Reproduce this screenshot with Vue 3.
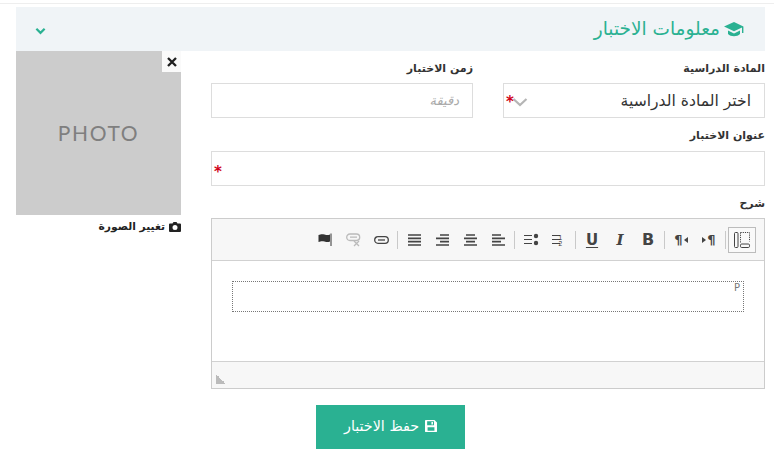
<script setup>
</script>

<template>
  <div class="page">
    <div class="topline"></div>
    <div class="panel">
      <header class="head">
        <h2 class="title">
          <svg class="cap" viewBox="0 0 20 16" width="20" height="16"><path d="M10 1 0 5.600l10 4.600 8-3.700V12h1.400V5.600z" fill="currentColor"/><path d="M4 9.600V13c1.400 1.500 3.600 2.200 6 2.200s4.600-.7 6-2.200V9.600l-6 2.800z" fill="currentColor"/></svg>
          <span>معلومات الاختبار</span>
        </h2>
        <svg class="chev" viewBox="0 0 12 8" width="11" height="8"><path d="M1.500 1.500 6 6l4.500-4.500" fill="none" stroke="currentColor" stroke-width="2.400"/></svg>
      </header>

      <div class="body">
        <form class="form">
          <div class="row">
            <div class="field">
              <label class="label">المادة الدراسية</label>
              <div class="box select">
                <span>اختر المادة الدراسية</span>
                <span class="star sel-star">*</span>
                <svg class="sel-chev" viewBox="0 0 16 10" width="16" height="10"><path d="M1.500 2 8 8l6.500-6" fill="none" stroke="#b5b5b5" stroke-width="2.200"/></svg>
              </div>
            </div>
            <div class="field">
              <label class="label">زمن الاختبار</label>
              <div class="box time"><span class="ph">دقيقة</span></div>
            </div>
          </div>

          <div class="field">
            <label class="label title-label">عنوان الاختبار</label>
            <div class="box wide"><span class="star wide-star">*</span></div>
          </div>

          <div class="field">
            <label class="label">شرح</label>
            <div class="editor">
              <div class="toolbar">
                <button type="button" class="tb on">
                  <svg viewBox="0 0 18 18" width="18" height="18" fill="none" stroke="#444"><rect x="1.500" y="1.500" width="3.500" height="15" rx="1"/><path d="M7.500 1.500h9v9M7.500 1.500v10" stroke-dasharray="1.200 1"/><rect x="7.500" y="13" width="9" height="3.500" rx="1.200"/></svg>
                </button>
                <i class="sep"></i>
                <button type="button" class="tb"><span class="pil"><b class="tri-r"></b>¶</span></button>
                <button type="button" class="tb"><span class="pil">¶<b class="tri-l"></b></span></button>
                <i class="sep"></i>
                <button type="button" class="tb glyph bold">B</button>
                <button type="button" class="tb glyph ital">I</button>
                <button type="button" class="tb glyph und">U</button>
                <i class="sep"></i>
                <button type="button" class="tb">
                  <svg viewBox="0 0 14 12" width="14" height="12"><path d="M8 1.500H0M8 5.500H0M8 9.500H0" stroke="#444"/><text x="10" y="5.500" class="num">1</text><text x="10" y="12" class="num">2</text></svg>
                </button>
                <button type="button" class="tb">
                  <svg viewBox="0 0 16 14" width="16" height="14"><path d="M9 2.500H1M9 6.500H1M9 10.500H1" stroke="#444"/><circle cx="13" cy="3" r="2.200" fill="#444"/><circle cx="13" cy="10" r="2.200" fill="#444"/></svg>
                </button>
                <i class="sep"></i>
                <button type="button" class="tb">
                  <svg viewBox="0 0 13 12" width="13" height="12"><path d="M0 1h9M0 4.300h13M0 7.700h9M0 11h13" stroke="#444" stroke-width="1.700"/></svg>
                </button>
                <button type="button" class="tb">
                  <svg viewBox="0 0 13 12" width="13" height="12"><path d="M2 1h9M0 4.300h13M2 7.700h9M0 11h13" stroke="#444" stroke-width="1.700"/></svg>
                </button>
                <button type="button" class="tb">
                  <svg viewBox="0 0 13 12" width="13" height="12"><path d="M4 1h9M0 4.300h13M4 7.700h9M0 11h13" stroke="#444" stroke-width="1.700"/></svg>
                </button>
                <button type="button" class="tb">
                  <svg viewBox="0 0 13 12" width="13" height="12"><path d="M0 1h13M0 4.300h13M0 7.700h13M0 11h13" stroke="#444" stroke-width="1.700"/></svg>
                </button>
                <i class="sep"></i>
                <button type="button" class="tb">
                  <svg viewBox="0 0 15 8" width="15" height="8" fill="none" stroke="#444" stroke-width="1.300"><rect x=".7" y=".7" width="13.600" height="6.600" rx="3.300"/><path d="M4 4h7"/></svg>
                </button>
                <button type="button" class="tb">
                  <svg viewBox="0 0 15 14" width="15" height="14" fill="none" stroke="#bbb" stroke-width="1.300"><rect x=".7" y="1" width="13" height="6.500" rx="3.200"/><path d="M4 4.200h7M8 8l5 5M13 8l-5 5"/></svg>
                </button>
                <button type="button" class="tb">
                  <svg viewBox="0 0 14 14" width="14" height="14"><path d="M0.500 2C3 1 4 1 6.500 1.500 9 2.200 10 2.200 12 1.500v7c-2 .7-3 .7-5.500 0C4 8 3 8 .5 9z" fill="#333"/><path d="M13 .5V13" stroke="#333" stroke-width="1"/></svg>
                </button>
              </div>
              <div class="content">
                <div class="block"><span class="tag">P</span></div>
              </div>
              <div class="foot"><span class="grip"></span></div>
            </div>
          </div>

          <button type="button" class="save">
            <svg viewBox="0 0 14 14" width="12" height="12"><path fill-rule="evenodd" d="M1 0h10l3 3v10a1 1 0 0 1-1 1H1a1 1 0 0 1-1-1V1a1 1 0 0 1 1-1zm1.500 1.500V6h8V1.500zM3 8.500v4h8v-4zM7.500 2.200h1.800v3H7.500z" fill="currentColor"/></svg>
            <span>حفظ الاختبار</span>
          </button>
        </form>

        <aside class="side">
          <div class="photo">
            <span class="ptext">PHOTO</span>
            <span class="close">
              <svg viewBox="0 0 10 10" width="10" height="10"><path d="M1 1l8 8M9 1 1 9" stroke="#1f1f1f" stroke-width="2.300"/></svg>
            </span>
          </div>
          <div class="change">
            <svg viewBox="0 0 12 10" width="12" height="10"><path fill-rule="evenodd" d="M1 1.500h2.500L4.500 0h3l1 1.500H11a1 1 0 0 1 1 1V9a1 1 0 0 1-1 1H1a1 1 0 0 1-1-1V2.500a1 1 0 0 1 1-1zM6 3a2.500 2.500 0 1 0 0 5 2.500 2.500 0 0 0 0-5z" fill="#222"/></svg>
            <span>تغيير الصورة</span>
          </div>
        </aside>
      </div>
    </div>
  </div>
</template>

<style>
html, body { margin: 0; background: #fff; }
</style>

<style scoped>
.page {
  direction: rtl;
  width: 774px;
  height: 467px;
  overflow: hidden;
  box-sizing: border-box;
  padding-top: 3px;
  font-family: "DejaVu Sans", "Noto Sans", sans-serif;
  color: #333;
}
.topline { height: 1px; background: #eee; margin-bottom: 3px; }
.panel { margin-right: 9px; margin-left: 16px; }
.head {
  height: 44px;
  background: #f0f4f7;
  display: flex;
  align-items: center;
  justify-content: space-between;
  padding: 0 21px 0 19px;
  color: #2ab192;
}
.title {
  margin: 0;
  font-size: 18.500px;
  font-weight: 400;
  line-height: 24px;
  display: flex;
  align-items: center;
  gap: 4px;
}
.cap { flex: none; width: 20px; height: 16px; }
.chev { margin-top: 3px; }
.body { display: flex; gap: 30px; }
.form { width: 554px; flex: none; }
.side { width: 165px; flex: none; }
.row { display: flex; gap: 30px; }
.row .field { width: 262px; }
.field { display: flex; flex-direction: column; }
.label {
  font-size: 11px;
  font-weight: 700;
  line-height: 14px;
  color: #333;
  margin-top: 11px;
  margin-bottom: 7px;
}
.title-label { margin-bottom: 8px; }
.box {
  position: relative;
  height: 35px;
  box-sizing: border-box;
  border: 1px solid #ddd;
  display: flex;
  align-items: center;
  padding: 0 13px;
  background: #fff;
}
.select { font-size: 15.600px; color: #333; }
.ph { font-size: 13px; font-style: italic; color: #aaa; }
.star { position: absolute; color: #d0021b; font-size: 15px; font-weight: 700; line-height: 1; }
.sel-star { left: 2px; top: 11px; }
.wide-star { left: 2px; top: 13px; }
.sel-chev { position: absolute; left: 8px; top: 13px; }
.editor {
  height: 171px;
  box-sizing: border-box;
  border: 1px solid #ccc;
  display: flex;
  flex-direction: column;
}
.toolbar {
  height: 42px;
  flex: none;
  box-sizing: border-box;
  background: #f7f7f7;
  border-bottom: 1px solid #d1d1d1;
  display: flex;
  align-items: center;
  padding: 0 8px;
}
.tb {
  width: 28px;
  height: 26px;
  padding: 0;
  border: 1px solid transparent;
  background: none;
  display: flex;
  align-items: center;
  justify-content: center;
  color: #444;
  font-family: "DejaVu Sans", sans-serif;
}
.tb.on { border-color: #bcbcbc; background: #f9f9f9; }
.sep { width: 1px; height: 18px; background: #c9c9c9; margin: 0 2px; }
.glyph { font-size: 16px; line-height: 1; padding-top: 1px; }
.bold { font-weight: 700; }
.ital { font-style: italic; font-weight: 700; font-family: "DejaVu Serif", serif; font-size: 15px; }
.und { text-decoration: underline; text-decoration-thickness: 1px; text-underline-offset: 2px; font-weight: 700; font-size: 15px; }
.num { font: 400 6.500px "Liberation Sans", sans-serif; fill: #333; }
.pil { direction: ltr; display: inline-flex; align-items: center; font-size: 13px; font-weight: 700; gap: 1px; }
.tri-l, .tri-r { display: inline-block; width: 0; height: 0; border: 3px solid transparent; }
.tri-l { border-right: 4px solid #444; border-left: 0; }
.tri-r { border-left: 4px solid #444; border-right: 0; }
.content { flex: 1; padding: 20px 20px 0; background: #fff; }
.block {
  position: relative;
  height: 31px;
  box-sizing: border-box;
  border: 1px dotted #777;
}
.tag {
  position: absolute;
  right: 3px;
  top: 0;
  font-size: 10px;
  line-height: 11px;
  color: #777;
}
.foot {
  height: 27px;
  flex: none;
  box-sizing: border-box;
  background: #f7f7f7;
  border-top: 1px solid #d1d1d1;
  display: flex;
  justify-content: flex-end;
  align-items: flex-end;
  padding: 0 4px 4px;
}
.grip {
  width: 10px;
  height: 10px;
  background: linear-gradient(to top right, #bbb 50%, transparent 50%);
}
.save {
  display: flex;
  align-items: center;
  justify-content: center;
  gap: 6px;
  width: 149px;
  height: 44px;
  margin: 16px 300px 0 0;
  border: 0;
  background: #2ab192;
  color: #fff;
  font-family: "DejaVu Sans", sans-serif;
  font-size: 14.300px;
  padding: 0 0 3px;
}
.photo {
  position: relative;
  height: 164px;
  background: #ccc;
  display: flex;
  align-items: center;
  justify-content: center;
  padding-bottom: 0;
}
.ptext {
  direction: ltr;
  font-family: "Lato", sans-serif;
  font-size: 21px;
  letter-spacing: 1.600px;
  color: #7f7f7f;
  font-weight: 400;
  margin-bottom: 2px;
}
.close {
  position: absolute;
  top: 0;
  right: 0;
  width: 19px;
  height: 21px;
  background: #fafafa;
  display: flex;
  align-items: center;
  justify-content: center;
}
.change {
  display: flex;
  align-items: center;
  gap: 4px;
  font-size: 10.700px;
  font-weight: 700;
  color: #222;
  margin-top: 4px;
  line-height: 16px;
}
</style>
